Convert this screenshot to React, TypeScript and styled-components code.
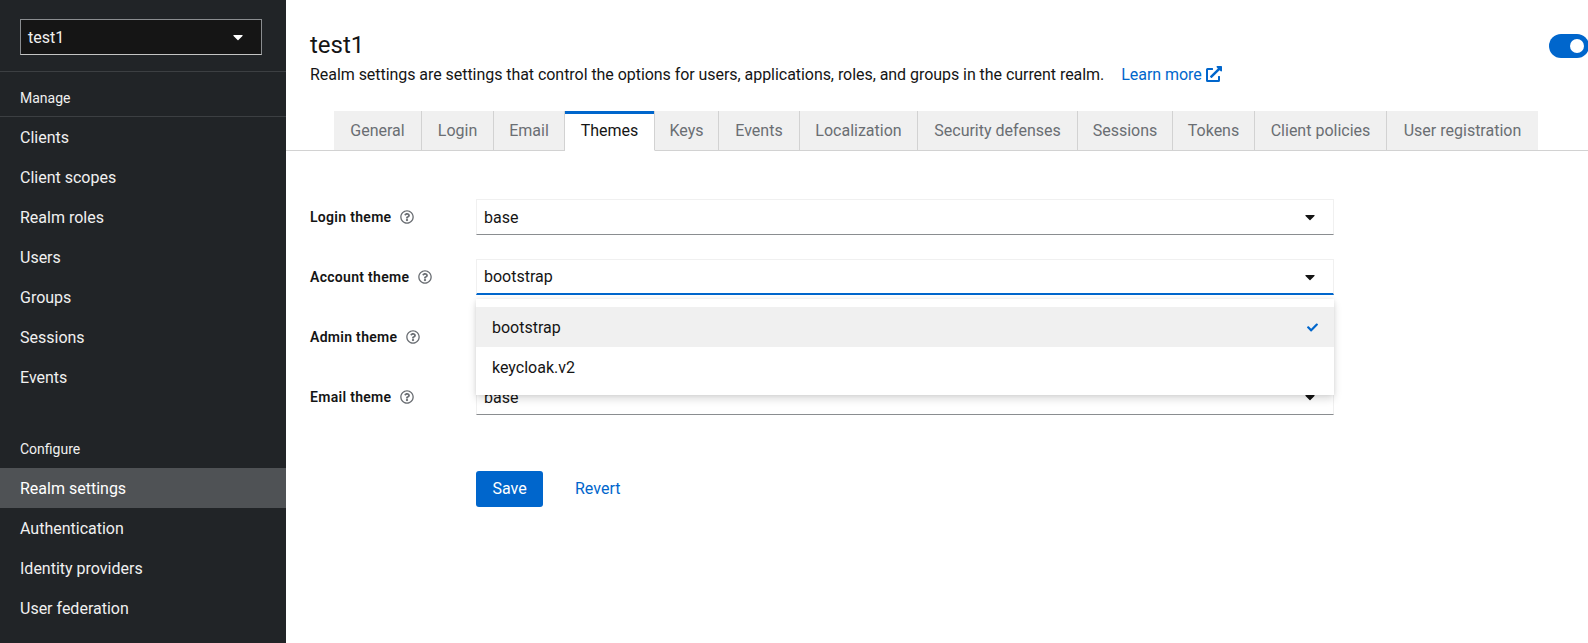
import React from "react";
import styled, { createGlobalStyle } from "styled-components";
import {
  FaCaretDown,
  FaCheck,
  FaExternalLinkAlt,
  FaRegQuestionCircle,
} from "react-icons/fa";

const GlobalStyle = createGlobalStyle`
  html, body {
    margin: 0;
    height: 100%;
    overflow: hidden;
    background: #fff;
    font-family: Roboto, "Open Sans", sans-serif;
    font-size: 16px;
    color: #151515;
  }
  * { box-sizing: border-box; }
`;

const manageItems = ["Clients", "Client scopes", "Realm roles", "Users", "Groups", "Sessions", "Events"];
const configureItems = ["Realm settings", "Authentication", "Identity providers", "User federation"];
const tabs = [
  { name: "General", width: 88 },
  { name: "Login", width: 72 },
  { name: "Email", width: 71 },
  { name: "Themes", width: 90 },
  { name: "Keys", width: 64 },
  { name: "Events", width: 81 },
  { name: "Localization", width: 118 },
  { name: "Security defenses", width: 160 },
  { name: "Sessions", width: 95 },
  { name: "Tokens", width: 82 },
  { name: "Client policies", width: 132 },
  { name: "User registration", width: 151 },
];

const App: React.FC = () => {
  return (
    <Page>
      <GlobalStyle />
      <Sidebar>
        <RealmArea>
          <RealmSelect>
            test1
            <FaCaretDown size={16} />
          </RealmSelect>
        </RealmArea>
        <NavTitle>Manage</NavTitle>
        <NavList>
          {manageItems.map((item) => (
            <NavItem key={item}>{item}</NavItem>
          ))}
        </NavList>
        <NavTitle $spaced>Configure</NavTitle>
        <NavList>
          {configureItems.map((item) => (
            <NavItem key={item} $active={item === "Realm settings"}>
              {item}
            </NavItem>
          ))}
        </NavList>
      </Sidebar>
      <Main>
        <Header>
          <div>
            <Title>test1</Title>
            <Description>
              Realm settings are settings that control the options for users,
              applications, roles, and groups in the current realm.
              <LearnMore>
                Learn more
                <FaExternalLinkAlt size={16} />
              </LearnMore>
            </Description>
          </div>
          <Toggle />
        </Header>
        <TabBar>
          {tabs.map((tab) => (
            <Tab key={tab.name} $width={tab.width} $active={tab.name === "Themes"}>
              {tab.name}
            </Tab>
          ))}
        </TabBar>
        <Form>
          <FormRow>
            <Label>
              Login theme
              <FaRegQuestionCircle size={14} />
            </Label>
            <Select>
              base
              <FaCaretDown size={16} />
            </Select>
          </FormRow>
          <FormRow>
            <Label>
              Account theme
              <FaRegQuestionCircle size={14} />
            </Label>
            <SelectWrap>
              <Select $open>
                bootstrap
                <FaCaretDown size={16} />
              </Select>
              <Menu>
                <MenuItem $selected>
                  bootstrap
                  <FaCheck size={11} />
                </MenuItem>
                <MenuItem>keycloak.v2</MenuItem>
              </Menu>
            </SelectWrap>
          </FormRow>
          <FormRow>
            <Label>
              Admin theme
              <FaRegQuestionCircle size={14} />
            </Label>
            <Select>
              base
              <FaCaretDown size={16} />
            </Select>
          </FormRow>
          <FormRow>
            <Label>
              Email theme
              <FaRegQuestionCircle size={14} />
            </Label>
            <Select>
              base
              <FaCaretDown size={16} />
            </Select>
          </FormRow>
          <Actions>
            <SaveButton>Save</SaveButton>
            <RevertButton>Revert</RevertButton>
          </Actions>
        </Form>
      </Main>
    </Page>
  );
};

export default App;

const Page = styled.div`
  display: flex;
  width: 100%;
  height: 643px;
  overflow: hidden;
`;

const Sidebar = styled.nav`
  width: 286px;
  flex-shrink: 0;
  background: #212427;
  color: #e0e0e0;
  overflow: hidden;
`;

const RealmArea = styled.div`
  height: 72px;
  padding: 19px 24px 0 20px;
  border-bottom: 1px solid #3c3f42;
`;

const RealmSelect = styled.div`
  width: 242px;
  height: 36px;
  padding: 0 15px 0 7px;
  display: flex;
  align-items: center;
  justify-content: space-between;
  background: #151515;
  border: 1px solid #8a8d90;
  border-bottom-color: #c4c4c4;
  color: #f0f0f0;

  svg {
    color: #fff;
  }
`;

const NavTitle = styled.div<{ $spaced?: boolean }>`
  height: ${(p) => (p.$spaced ? "39px" : "45px")};
  margin-top: ${(p) => (p.$spaced ? "32px" : "0")};
  padding: ${(p) => (p.$spaced ? "0" : "8px")} 0 0 20px;
  display: flex;
  align-items: center;
  font-size: 14px;
  color: #f0f0f0;
  border-bottom: ${(p) => (p.$spaced ? "none" : "1px solid #3c3f42")};
`;

const NavList = styled.div`
  display: flex;
  flex-direction: column;
`;

const NavItem = styled.div<{ $active?: boolean }>`
  height: 40px;
  padding-left: 20px;
  display: flex;
  align-items: center;
  background: ${(p) => (p.$active ? "#4f5255" : "transparent")};
  color: ${(p) => (p.$active ? "#fff" : "#f0f0f0")};
`;

const Main = styled.main`
  flex: 1;
  min-width: 0;
  overflow: hidden;
`;

const Header = styled.header`
  height: 111px;
  padding: 31px 0 0 24px;
  display: flex;
  justify-content: space-between;
  align-items: flex-start;
`;

const Title = styled.h1`
  margin: 0;
  font-size: 24px;
  font-weight: 400;
  line-height: 29px;
  color: #151515;
`;

const Description = styled.p`
  margin: 3px 0 0;
  font-size: 16px;
  line-height: 24px;
  letter-spacing: -0.05px;
  color: #151515;
`;

const LearnMore = styled.a`
  margin-left: 17px;
  color: #06c;

  svg {
    margin-left: 4px;
    vertical-align: -2px;
  }
`;

const Toggle = styled.div`
  position: relative;
  width: 40px;
  height: 24px;
  margin: 3px -1px 0 0;
  flex-shrink: 0;
  border-radius: 12px;
  background: #06c;

  &::after {
    content: "";
    position: absolute;
    top: 5px;
    right: 5px;
    width: 14px;
    height: 14px;
    border-radius: 50%;
    background: #fff;
  }
`;

const TabBar = styled.div`
  height: 40px;
  padding-left: 48px;
  display: flex;
  border-bottom: 1px solid #d2d2d2;
`;

const Tab = styled.div<{ $active?: boolean; $width: number }>`
  width: ${(p) => p.$width}px;
  height: 40px;
  flex-shrink: 0;
  display: flex;
  align-items: center;
  justify-content: center;
  white-space: nowrap;
  background: ${(p) => (p.$active ? "#fff" : "#f0f0f0")};
  color: ${(p) => (p.$active ? "#151515" : "#6a6e73")};
  border-right: 1px solid #d2d2d2;
  border-bottom: 1px solid ${(p) => (p.$active ? "#fff" : "#d2d2d2")};
  box-shadow: ${(p) => (p.$active ? "inset 0 3px 0 #06c" : "none")};

  &:last-child {
    border-right: none;
  }
`;

const Form = styled.form`
  padding: 48px 0 0 24px;
  width: 1048px;
`;

const FormRow = styled.div`
  display: grid;
  grid-template-columns: 166px 858px;
  align-items: center;
  height: 36px;
  margin-bottom: 24px;
`;

const Label = styled.label`
  display: flex;
  align-items: center;
  gap: 9px;
  font-size: 14px;
  font-weight: 600;
  letter-spacing: 0.3px;
  color: #151515;

  svg {
    color: #6a6e73;
  }
`;

const SelectWrap = styled.div`
  position: relative;
`;

const Select = styled.div<{ $open?: boolean }>`
  height: 36px;
  padding: 0 15px 0 7px;
  display: flex;
  align-items: center;
  justify-content: space-between;
  background: #fff;
  color: #151515;
  border: 1px solid #f0f0f0;
  border-bottom: ${(p) => (p.$open ? "2px solid #06c" : "1px solid #8a8d90")};
`;

const Menu = styled.div`
  position: absolute;
  z-index: 2;
  top: 40px;
  left: 0;
  width: 100%;
  padding: 8px 0;
  background: #fff;
  box-shadow: 0 4px 8px rgba(3, 3, 3, 0.14), 0 0 4px rgba(3, 3, 3, 0.08);
`;

const MenuItem = styled.div<{ $selected?: boolean }>`
  height: 40px;
  padding: 0 16px;
  display: flex;
  align-items: center;
  justify-content: space-between;
  background: ${(p) => (p.$selected ? "#f0f0f0" : "#fff")};
  color: #151515;

  svg {
    color: #06c;
  }
`;

const Actions = styled.div`
  margin: 56px 0 0 166px;
  display: flex;
  align-items: center;
  gap: 16px;
`;

const SaveButton = styled.button`
  width: 67px;
  height: 36px;
  padding: 0 0 2px;
  border: none;
  border-radius: 3px;
  background: #06c;
  color: #fff;
  font: inherit;
`;

const RevertButton = styled.button`
  height: 36px;
  padding: 0 16px 2px;
  border: none;
  background: none;
  color: #06c;
  font: inherit;
`;
